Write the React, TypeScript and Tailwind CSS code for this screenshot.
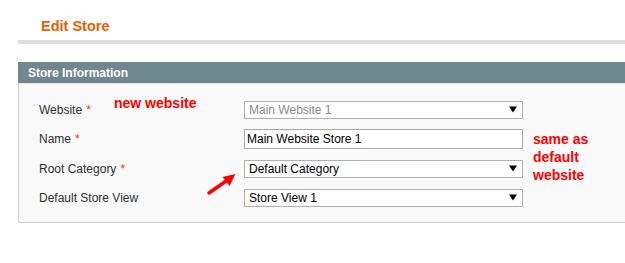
import React from "react";

const Triangle = () => (
  <svg width="8" height="7" viewBox="0 0 8 7" className="mr-[5px] shrink-0">
    <path d="M0 0.5 H8 L4 6.5 Z" fill="#000" />
  </svg>
);

function SelectBox({ value, disabled }: { value: string; disabled?: boolean }) {
  return (
    <div className="flex h-[18px] w-[279px] items-center justify-between border border-[#b0b0b0] bg-white pl-[4px]">
      <span className={`text-[12px] leading-none ${disabled ? "text-[#8a8a8a]" : "text-black"}`}>{value}</span>
      <Triangle />
    </div>
  );
}

function Row({ label, required, height, children }: { label: string; required?: boolean; height: string; children: React.ReactNode }) {
  return (
    <div className={`flex items-center ${height}`}>
      <div className="w-[205px] text-[12px] text-[#2f2f2f]">
        {label}
        {required && <span className="ml-[4px] text-[#eb340a]">*</span>}
      </div>
      {children}
    </div>
  );
}

export default function App() {
  return (
    <div className="relative h-[263px] w-[625px] overflow-hidden bg-white pl-[18px] font-['Liberation_Sans',Arial,sans-serif]">
      <div className="h-[40px] pl-[23px] pt-[17px]">
        <h1 className="text-[14.5px] font-bold leading-[18px] text-[#eb5e00]">Edit Store</h1>
      </div>
      <div className="h-[4px] bg-[#dedede]" />

      <div className="mt-[18px]">
        <div className="flex h-[21px] items-center bg-[#6f8890] pl-[10px]">
          <span className="text-[12px] font-bold text-white">Store Information</span>
        </div>
        <div className="border-t border-l border-b border-t-[#e6e6e6] border-l-[#cccccc] border-b-[#cccccc] bg-[#f9f9f9] pl-[20px] pt-[11px] pb-[10px]">
          <Row label="Website" required height="h-[29px]">
            <SelectBox value="Main Website 1" disabled />
          </Row>
          <Row label="Name" required height="h-[30px]">
            <div className="flex h-[20px] w-[279px] items-center border border-[#a8a8a8] bg-white pl-[2px]">
              <span className="text-[12px] leading-none text-black">Main Website Store 1</span>
            </div>
          </Row>
          <Row label="Root Category" required height="h-[29px]">
            <SelectBox value="Default Category" />
          </Row>
          <Row label="Default Store View" height="h-[29px]">
            <SelectBox value="Store View 1" />
          </Row>
        </div>
      </div>

      {/* annotations */}
      <div className="absolute left-[114px] top-[95px] text-[14px] font-bold leading-[16px] text-[#ff0000]">new website</div>
      <div className="absolute left-[533px] top-[130px] text-[14px] font-bold leading-[18px] text-[#ff0000]">
        same as
        <br />
        default
        <br />
        website
      </div>
      <svg className="absolute left-[200px] top-[165px]" width="45" height="35" viewBox="0 0 45 35">
        <line x1="9" y1="28" x2="29" y2="14" stroke="#ff0000" strokeWidth="3.5" strokeLinecap="round" />
        <path d="M35.5 9 L22.5 12 L29.5 21 Z" fill="#ff0000" />
      </svg>
    </div>
  );
}
